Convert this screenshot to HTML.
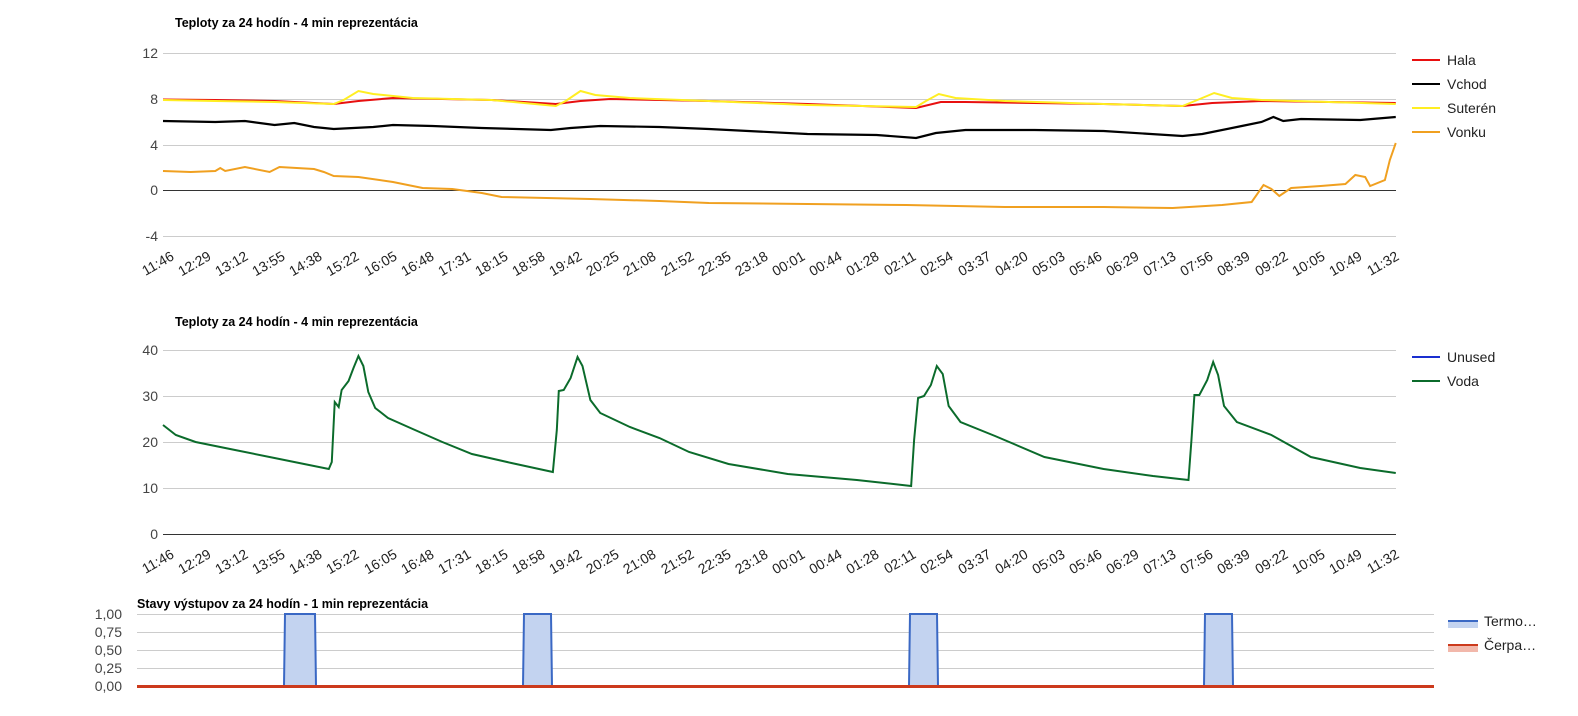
<!DOCTYPE html>
<html><head><meta charset="utf-8"><style>
html,body{margin:0;padding:0;background:#fff;overflow:hidden;width:1578px;height:716px;}
svg{display:block;font-family:"Liberation Sans",Arial,sans-serif;}
</style></head><body>
<svg width="1578" height="716" viewBox="0 0 1578 716">
<defs>
<g id="xl" font-size="14" fill="#222" text-anchor="end">
<text transform="translate(175,0) rotate(-30)">11:46</text><text transform="translate(212,0) rotate(-30)">12:29</text><text transform="translate(249,0) rotate(-30)">13:12</text><text transform="translate(286,0) rotate(-30)">13:55</text><text transform="translate(323,0) rotate(-30)">14:38</text><text transform="translate(360,0) rotate(-30)">15:22</text><text transform="translate(398,0) rotate(-30)">16:05</text><text transform="translate(435,0) rotate(-30)">16:48</text><text transform="translate(472,0) rotate(-30)">17:31</text><text transform="translate(509,0) rotate(-30)">18:15</text><text transform="translate(546,0) rotate(-30)">18:58</text><text transform="translate(583,0) rotate(-30)">19:42</text><text transform="translate(620,0) rotate(-30)">20:25</text><text transform="translate(657,0) rotate(-30)">21:08</text><text transform="translate(695,0) rotate(-30)">21:52</text><text transform="translate(732,0) rotate(-30)">22:35</text><text transform="translate(769,0) rotate(-30)">23:18</text><text transform="translate(806,0) rotate(-30)">00:01</text><text transform="translate(843,0) rotate(-30)">00:44</text><text transform="translate(880,0) rotate(-30)">01:28</text><text transform="translate(917,0) rotate(-30)">02:11</text><text transform="translate(954,0) rotate(-30)">02:54</text><text transform="translate(992,0) rotate(-30)">03:37</text><text transform="translate(1029,0) rotate(-30)">04:20</text><text transform="translate(1066,0) rotate(-30)">05:03</text><text transform="translate(1103,0) rotate(-30)">05:46</text><text transform="translate(1140,0) rotate(-30)">06:29</text><text transform="translate(1177,0) rotate(-30)">07:13</text><text transform="translate(1214,0) rotate(-30)">07:56</text><text transform="translate(1251,0) rotate(-30)">08:39</text><text transform="translate(1289,0) rotate(-30)">09:22</text><text transform="translate(1326,0) rotate(-30)">10:05</text><text transform="translate(1363,0) rotate(-30)">10:49</text><text transform="translate(1400,0) rotate(-30)">11:32</text>
</g>
</defs>
<!-- Chart 1 -->
<text x="175" y="27" font-size="12.5" font-weight="bold" fill="#000">Teploty za 24 hodín - 4 min reprezentácia</text>
<g stroke="#ccc" stroke-width="1">
<line x1="163" x2="1396" y1="53.5" y2="53.5"/><line x1="163" x2="1396" y1="99.5" y2="99.5"/>
<line x1="163" x2="1396" y1="145.5" y2="145.5"/><line x1="163" x2="1396" y1="236.5" y2="236.5"/>
</g>
<line x1="163" x2="1396" y1="190.5" y2="190.5" stroke="#333"/>
<g font-size="14" fill="#444" text-anchor="end">
<text x="158" y="58">12</text><text x="158" y="104">8</text><text x="158" y="150">4</text><text x="158" y="195">0</text><text x="158" y="241">-4</text>
</g>
<g transform="translate(163,0) scale(0.987,1) translate(-147,0)">
<polyline fill="none" stroke="#000" stroke-width="2.2" points="147,121 200,122 230,121 260,125 280,123 300,127 320,129 360,127 380,125 420,126 470,128 540,130 560,128 590,126 650,127 700,129 800,134 870,135 910,138 930,133 960,130 1030,130 1100,131 1180,136 1200,134 1240,126 1260,122 1272,117 1282,121 1300,119 1360,120 1396,117"/>
<polyline fill="none" stroke="#f0a020" stroke-width="2" points="147,171 175,172 200,171 205,168 210,171 230,167 255,172 265,167 300,169 310,172 320,176 345,177 380,182 410,188 440,189 470,193 490,197 580,199 650,201 700,203 800,204 900,205 1000,207 1100,207 1170,208 1220,205 1250,202 1262,185 1270,189 1278,196 1290,188 1320,186 1345,184 1355,175 1365,177 1370,186 1385,180 1390,160 1396,143"/>
<polyline fill="none" stroke="#e81010" stroke-width="2" points="147,99.5 200,100 260,101 320,104 345,101 380,98 480,100 545,104 570,101 600,99 700,101 800,104 910,108 935,102 960,102 1100,104 1180,106 1210,103 1260,101 1396,103"/>
<polyline fill="none" stroke="#ffee22" stroke-width="2" points="147,100 200,101 260,102 320,104 330,100 345,91 360,94 400,98 480,100 545,106 555,101 570,91 585,95 620,98 700,101 800,105 910,107 920,101 933,94 950,98 1000,101 1100,104 1180,106 1195,100 1212,93 1230,98 1260,100 1396,104"/>
</g>
<use href="#xl" transform="translate(0,259)"/>
<g font-size="14" fill="#222">
<line x1="1412" x2="1440" y1="60" y2="60" stroke="#e81010" stroke-width="2"/><text x="1447" y="65">Hala</text>
<line x1="1412" x2="1440" y1="84" y2="84" stroke="#000" stroke-width="2"/><text x="1447" y="89">Vchod</text>
<line x1="1412" x2="1440" y1="108" y2="108" stroke="#ffee22" stroke-width="2"/><text x="1447" y="113">Suterén</text>
<line x1="1412" x2="1440" y1="132" y2="132" stroke="#f0a020" stroke-width="2"/><text x="1447" y="137">Vonku</text>
</g>
<!-- Chart 2 -->
<text x="175" y="326" font-size="12.5" font-weight="bold" fill="#000">Teploty za 24 hodín - 4 min reprezentácia</text>
<g stroke="#ccc" stroke-width="1">
<line x1="163" x2="1396" y1="350.5" y2="350.5"/><line x1="163" x2="1396" y1="396.5" y2="396.5"/>
<line x1="163" x2="1396" y1="442.5" y2="442.5"/><line x1="163" x2="1396" y1="488.5" y2="488.5"/>
</g>
<line x1="163" x2="1396" y1="534.5" y2="534.5" stroke="#333"/>
<g font-size="14" fill="#444" text-anchor="end">
<text x="158" y="355">40</text><text x="158" y="401">30</text><text x="158" y="447">20</text><text x="158" y="493">10</text><text x="158" y="539">0</text>
</g>
<g transform="translate(163,0) scale(0.987,1) translate(-147,0)">
<polyline fill="none" stroke="#0b6b2b" stroke-width="2" points="147,425 160,435 180,442 220,450 260,458 290,464 315,469 318,462 321,402 325,407 328,390 335,381 340,368 345,356 350,366 355,392 362,408 375,418 400,429 430,442 460,454 500,463 542,472 546,430 548,391 553,390 560,378 567,357 572,366 580,400 590,413 620,427 650,438 680,452 720,464 780,474 850,480 905,486 908,440 912,398 918,396 925,385 931,366 937,374 943,406 955,422 990,436 1040,457 1100,469 1150,476 1186,480 1189,440 1192,395 1197,395 1205,380 1211,362 1216,375 1222,406 1235,422 1270,435 1310,457 1360,468 1396,473"/>
</g>
<use href="#xl" transform="translate(0,557)"/>
<g font-size="14" fill="#222">
<line x1="1412" x2="1440" y1="357" y2="357" stroke="#1a2fd0" stroke-width="2"/><text x="1447" y="362">Unused</text>
<line x1="1412" x2="1440" y1="381" y2="381" stroke="#0b6b2b" stroke-width="2"/><text x="1447" y="386">Voda</text>
</g>
<!-- Chart 3 -->
<text x="137" y="608" font-size="12.5" font-weight="bold" fill="#000">Stavy výstupov za 24 hodín - 1 min reprezentácia</text>
<g stroke="#ccc" stroke-width="1">
<line x1="137" x2="1434" y1="614.5" y2="614.5"/><line x1="137" x2="1434" y1="632.5" y2="632.5"/>
<line x1="137" x2="1434" y1="650.5" y2="650.5"/><line x1="137" x2="1434" y1="668.5" y2="668.5"/>
</g>
<g font-size="14" fill="#444" text-anchor="end">
<text x="122" y="619">1,00</text><text x="122" y="637">0,75</text><text x="122" y="655">0,50</text><text x="122" y="673">0,25</text><text x="122" y="691">0,00</text>
</g>
<g fill="#c3d3f0" stroke="#3a68c4" stroke-width="2">
<polyline points="284,686 285,614 315,614 316,686"/>
<polyline points="523,686 524,614 551,614 552,686"/>
<polyline points="909,686 910,614 937,614 938,686"/>
<polyline points="1204,686 1205,614 1232,614 1233,686"/>
</g>
<line x1="137" x2="1434" y1="686.5" y2="686.5" stroke="#cc3a1c" stroke-width="3"/>
<rect x="1448" y="621" width="30" height="7" fill="#c3d3f0"/>
<line x1="1448" x2="1478" y1="621" y2="621" stroke="#3a68c4" stroke-width="2"/>
<text x="1484" y="626" font-size="14" fill="#222">Termo…</text>
<rect x="1448" y="645" width="30" height="7" fill="#f2b8ab"/>
<line x1="1448" x2="1478" y1="645" y2="645" stroke="#cc3a1c" stroke-width="2"/>
<text x="1484" y="650" font-size="14" fill="#222">Čerpa…</text>
</svg>
</body></html>
